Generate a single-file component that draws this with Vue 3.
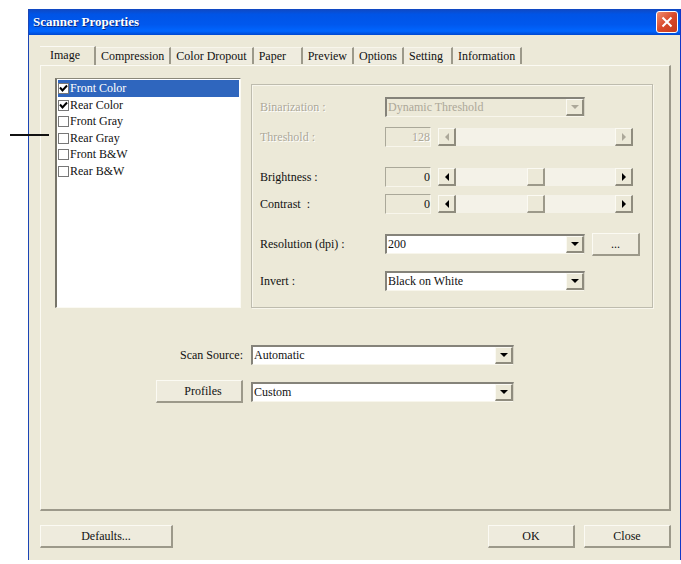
<script setup>
import { ref } from 'vue'

const tabs = ['Image', 'Compression', 'Color Dropout', 'Paper', 'Preview', 'Options', 'Setting', 'Information']
const activeTab = ref('Image')

const images = ref([
  { name: 'Front Color', checked: true },
  { name: 'Rear Color', checked: true },
  { name: 'Front Gray', checked: false },
  { name: 'Rear Gray', checked: false },
  { name: 'Front B&W', checked: false },
  { name: 'Rear B&W', checked: false }
])
const selected = ref('Front Color')

const threshold = ref(128)
const brightness = ref(0)
const contrast = ref(0)
const resolution = ref('200')
const invert = ref('Black on White')
const source = ref('Automatic')
const profile = ref('Custom')
</script>

<template>
  <main class="page">
    <section class="dialog">
      <header class="title-bar">
        <h1>Scanner Properties</h1>
        <button class="close-button" aria-label="Close window">
          <svg viewBox="0 0 12 12" width="12" height="12">
            <path d="M1.5 1.5 L10.5 10.5 M10.5 1.5 L1.5 10.5" stroke="#fff" stroke-width="2" />
          </svg>
        </button>
      </header>

      <div class="body">
        <nav class="tabs">
          <button
            v-for="tab in tabs"
            :key="tab"
            class="tab"
            :class="{ active: tab === activeTab }"
            @click="activeTab = tab"
          >{{ tab }}</button>
        </nav>

        <div class="panel">
          <div class="settings">
            <ul class="image-list">
              <li
                v-for="image in images"
                :key="image.name"
                :class="{ selected: image.name === selected }"
                @click="selected = image.name"
              >
                <label>
                  <span class="check">
                    <input v-model="image.checked" type="checkbox">
                    <svg v-if="image.checked" viewBox="0 0 9 9" width="9" height="9">
                      <path d="M1 3.5 L3.5 6.5 L8 1.5" fill="none" stroke="#000" stroke-width="2" />
                    </svg>
                  </span>
                  {{ image.name }}
                </label>
              </li>
            </ul>

            <div class="group">
              <div class="rows">
                <div class="row disabled">
                  <label for="binarization">Binarization :</label>
                  <div class="combo">
                    <select id="binarization" disabled>
                      <option>Dynamic Threshold</option>
                    </select>
                    <span class="drop"><i class="arrow down"></i></span>
                  </div>
                </div>
                <div class="row disabled">
                  <label for="threshold">Threshold :</label>
                  <output class="value">{{ threshold }}</output>
                  <div class="scroll">
                    <button class="step" disabled aria-label="Decrease threshold"><i class="arrow left"></i></button>
                    <input id="threshold" v-model="threshold" type="range" min="0" max="255" disabled>
                    <button class="step" disabled aria-label="Increase threshold"><i class="arrow right"></i></button>
                  </div>
                </div>
              </div>

              <div class="rows tight">
                <div class="row">
                  <label for="brightness">Brightness :</label>
                  <output class="value">{{ brightness }}</output>
                  <div class="scroll">
                    <button class="step" aria-label="Decrease brightness" @click="brightness--"><i class="arrow left"></i></button>
                    <input id="brightness" v-model.number="brightness" type="range" min="-100" max="100">
                    <button class="step" aria-label="Increase brightness" @click="brightness++"><i class="arrow right"></i></button>
                  </div>
                </div>
                <div class="row">
                  <label for="contrast">Contrast &nbsp;:</label>
                  <output class="value">{{ contrast }}</output>
                  <div class="scroll">
                    <button class="step" aria-label="Decrease contrast" @click="contrast--"><i class="arrow left"></i></button>
                    <input id="contrast" v-model.number="contrast" type="range" min="-100" max="100">
                    <button class="step" aria-label="Increase contrast" @click="contrast++"><i class="arrow right"></i></button>
                  </div>
                </div>
              </div>

              <div class="rows loose">
                <div class="row">
                  <label for="resolution">Resolution (dpi) :</label>
                  <div class="combo">
                    <select id="resolution" v-model="resolution">
                      <option>200</option>
                      <option>300</option>
                      <option>600</option>
                    </select>
                    <span class="drop"><i class="arrow down"></i></span>
                  </div>
                  <button class="button more">...</button>
                </div>
                <div class="row">
                  <label for="invert">Invert :</label>
                  <div class="combo">
                    <select id="invert" v-model="invert">
                      <option>Black on White</option>
                      <option>White on Black</option>
                    </select>
                    <span class="drop"><i class="arrow down"></i></span>
                  </div>
                </div>
              </div>
            </div>
          </div>

          <div class="source">
            <label for="source">Scan Source:</label>
            <div class="combo">
              <select id="source" v-model="source">
                <option>Automatic</option>
                <option>Flatbed</option>
              </select>
              <span class="drop"><i class="arrow down"></i></span>
            </div>
            <button class="button profiles">Profiles</button>
            <div class="combo">
              <select v-model="profile" aria-label="Profile">
                <option>Custom</option>
              </select>
              <span class="drop"><i class="arrow down"></i></span>
            </div>
          </div>
        </div>

        <footer class="footer">
          <button class="button defaults">Defaults...</button>
          <button class="button">OK</button>
          <button class="button">Close</button>
        </footer>
      </div>
      <span class="pointer"></span>
    </section>
  </main>
</template>

<style>
body {
  margin: 0;
  background: #fff;
}
</style>

<style scoped>
* {
  box-sizing: border-box;
}
.page {
  display: flex;
  min-height: 100vh;
  padding: 9px 0 4px 28px;
  font-family: "Liberation Serif", "Times New Roman", serif;
  font-size: 12px;
  line-height: 16px;
  color: #111;
}
button,
select,
input {
  margin: 0;
  font: inherit;
  color: inherit;
}
.dialog {
  position: relative;
  display: flex;
  flex-direction: column;
  flex: 1;
  min-width: 0;
  background: #ece9d8;
  border-left: 1px solid #1c45b4;
  border-right: 1px solid #1238c8;
}
.title-bar {
  display: flex;
  align-items: center;
  justify-content: space-between;
  height: 26px;
  padding: 0 2px 0 4px;
  background: linear-gradient(#1248c0, #0054e6 20%, #0058ee 60%, #0066ff 85%, #0048d0);
}
h1 {
  margin: 0;
  font-size: 13px;
  color: #fff;
  text-shadow: 1px 1px #0a2a80;
}
.close-button {
  display: flex;
  align-items: center;
  justify-content: center;
  width: 22px;
  height: 22px;
  padding: 0;
  background: linear-gradient(135deg, #ee8d70, #d9492a 50%, #c43c1c);
  border: 1px solid #fff;
  border-radius: 3px;
}
.body {
  display: flex;
  flex-direction: column;
  flex: 1;
  padding: 11px 9px 12px 11px;
}
.tabs {
  display: flex;
  align-items: flex-end;
}
.tab {
  height: 17px;
  min-width: 49px;
  margin-bottom: 1px;
  padding: 0 5px;
  text-align: left;
  white-space: nowrap;
  background: #efecdf;
  border: 0;
  border-top: 1px solid #f8f6ec;
  border-right: 2px solid #9c998a;
}
.tab.active {
  height: 19px;
  min-width: 56px;
  margin-bottom: 0;
  padding: 0 10px 2px;
  background: #ece9d8;
  border-top-color: #fbfaf4;
}
.panel {
  flex: 1;
  padding: 12px 16px 12px 14px;
  border: 1px solid #fbfaf3;
  border-right: 2px solid #9c998a;
  border-bottom: 2px solid #9c998a;
}
.settings {
  display: flex;
  gap: 10px;
}
.image-list {
  width: 186px;
  margin: 0;
  padding: 1px;
  list-style: none;
  background: #fff;
  border: 1px solid #fbfaf3;
  border-top: 1px solid #8a887a;
  border-left: 2px solid #77756a;
}
.image-list li:nth-child(odd) {
  height: 17px;
}
.image-list li:nth-child(even) {
  height: 16px;
}
.image-list .selected {
  color: #fff;
  background: #2f66be;
}
.image-list label {
  display: flex;
  align-items: center;
}
.check {
  position: relative;
  width: 11px;
  height: 11px;
  margin-right: 1px;
}
.check input {
  display: block;
  width: 11px;
  height: 11px;
  appearance: none;
  background: #fff;
  border: 1px solid #777;
}
.check svg {
  position: absolute;
  top: 1px;
  left: 1px;
  pointer-events: none;
}
.group {
  display: flex;
  flex-direction: column;
  gap: 20px;
  flex: 1;
  min-width: 0;
  margin-top: 6px;
  padding: 12px 12px 16px 8px;
  border: 1px solid #bebcae;
  box-shadow: 1px 1px #f8f6ec, inset 1px 1px #f8f6ec;
}
.rows {
  display: flex;
  flex-direction: column;
  gap: 10px;
}
.rows.tight {
  gap: 7px;
}
.rows.loose {
  gap: 17px;
}
.row {
  display: flex;
  align-items: center;
  height: 20px;
}
.row > label {
  flex: none;
  width: 125px;
}
.row .combo {
  flex: 1;
  margin-right: 55px;
}
.row .combo:has(+ .more) {
  margin-right: 7px;
}
.disabled {
  color: #aca899;
  text-shadow: 1px 1px #fff;
}
.value {
  flex: none;
  width: 46px;
  height: 20px;
  margin-right: 7px;
  padding: 1px 0;
  text-align: right;
  border: 1px solid #aaa899;
  border-right-color: #f8f6ec;
  border-bottom-color: #f8f6ec;
}
.scroll {
  display: flex;
  flex: 1;
  min-width: 0;
  height: 18px;
  margin-right: 7px;
  background: #f4f2e8;
}
.scroll input {
  flex: 1;
  min-width: 0;
  appearance: none;
  background: none;
}
.scroll input::-webkit-slider-thumb {
  width: 18px;
  height: 18px;
  appearance: none;
  background: #ece9d8;
  border: 1px solid #fbfaf3;
  border-right: 2px solid #9c998a;
  border-bottom: 2px solid #9c998a;
}
.scroll input:disabled::-webkit-slider-thumb {
  visibility: hidden;
}
.step,
.drop {
  display: flex;
  align-items: center;
  justify-content: center;
  width: 18px;
  padding: 0;
  background: #ece9d8;
  border: 1px solid #fbfaf3;
  border-right: 2px solid #8f8c7e;
  border-bottom: 2px solid #8f8c7e;
}
.arrow {
  border: 4px solid transparent;
}
.arrow.down {
  margin-top: 4px;
  border-top-color: #000;
}
.arrow.left {
  margin-right: 4px;
  border-right-color: #000;
}
.arrow.right {
  margin-left: 4px;
  border-left-color: #000;
}
.disabled .arrow.down {
  border-top-color: #aca899;
}
.disabled .arrow.left {
  border-right-color: #aca899;
}
.disabled .arrow.right {
  border-left-color: #aca899;
}
.combo {
  position: relative;
  min-width: 0;
  height: 20px;
}
.combo select {
  display: block;
  width: 100%;
  height: 20px;
  padding: 0 20px 1px 1px;
  appearance: none;
  background: #fff;
  border: 2px solid #85837a;
  border-right: 1px solid #d6d3c4;
  border-bottom: 1px solid #f8f6ec;
  border-radius: 0;
}
.combo select:disabled {
  background: #ece9d8;
  opacity: 1;
}
.drop {
  position: absolute;
  top: 2px;
  right: 1px;
  bottom: 1px;
  pointer-events: none;
}
.button {
  width: 87px;
  height: 23px;
  padding: 0;
  background: #eeebdd;
  border: 1px solid #fbfaf3;
  border-right: 2px solid #9c998a;
  border-bottom: 2px solid #9c998a;
}
.button.more {
  flex: none;
  width: 48px;
}
.source {
  display: grid;
  grid-template-columns: 188px minmax(0, 263px);
  align-items: center;
  justify-items: end;
  gap: 15px 8px;
  margin-top: 37px;
}
.source .combo {
  width: 100%;
}
.button.profiles {
  padding-left: 8px;
}
.footer {
  display: flex;
  gap: 9px;
  margin-top: 14px;
}
.button.defaults {
  width: 133px;
  margin-right: auto;
}
/* callout line aimed at the image list */
.pointer {
  position: absolute;
  top: 125px;
  left: -19px;
  width: 39px;
  height: 2px;
  background: #111;
}
</style>
